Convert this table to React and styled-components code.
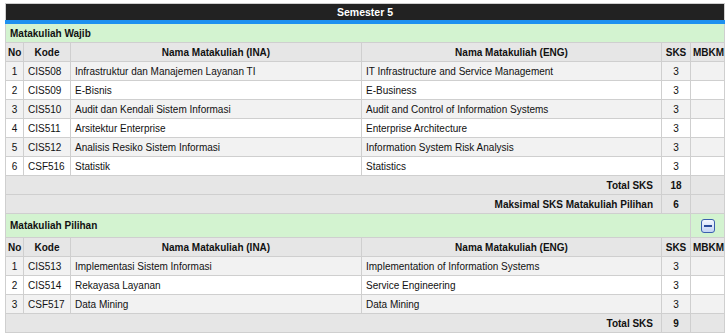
import React from "react";
import styled, { createGlobalStyle } from "styled-components";

const Global = createGlobalStyle`
  html, body { margin: 0; padding: 0; background: #fff; }
  body {
    font-family: "Liberation Sans", Arial, sans-serif;
    font-size: 10px;
    color: #111;
  }
`;

const Page = styled.div`
  padding: 3px 2px 0 5px;
`;

const Table = styled.table`
  width: 719px;
  border-collapse: collapse;
  table-layout: fixed;
  border: 1px solid #cfcfcf;
`;

const TitleCell = styled.th`
  background: #222;
  color: #fff;
  font-weight: bold;
  font-size: 10.5px;
  height: 16px;
  padding: 0;
  text-align: center;
  border-bottom: 4px solid #1e90ef;
`;

const GroupCell = styled.td`
  background: #d3f3d0;
  font-weight: bold;
  height: ${(p) => (p.$tall ? 23 : 18)}px;
  padding: 0 4px;
  border: 1px solid #cfcfcf;
`;

const HeadCell = styled.th`
  background: #e6e6e6;
  font-weight: bold;
  height: 18px;
  padding: 0 2px;
  text-align: center;
  border: 1px solid #cfcfcf;
  white-space: nowrap;
`;

const Row = styled.tr`
  background: ${(p) => (p.$odd ? "#f2f2f2" : "#fff")};
`;

const Cell = styled.td`
  height: 18px;
  padding: 0 4px;
  border: 1px solid #cfcfcf;
  text-align: ${(p) => p.$align || "left"};
  white-space: nowrap;
  overflow: hidden;
`;

const SumCell = styled.td`
  background: #e6e6e6;
  font-weight: bold;
  height: 18px;
  padding: 0 8px;
  border: 1px solid #cfcfcf;
  text-align: ${(p) => p.$align || "right"};
`;

const ToggleCell = styled.td`
  background: #d3f3d0;
  border: 1px solid #cfcfcf;
  text-align: center;
  padding: 0;
`;

const CollapseButton = styled.span`
  display: inline-block;
  vertical-align: middle;
  width: 12px;
  height: 12px;
  border: 1px solid #3a5fae;
  border-radius: 3px;
  background: linear-gradient(#f4f7ff, #c4d4f4);
  position: relative;
  &::after {
    content: "";
    position: absolute;
    left: 2px;
    right: 2px;
    top: 5px;
    height: 2px;
    background: #2b4c9a;
  }
`;

const wajib = [
  ["CIS508", "Infrastruktur dan Manajemen Layanan TI", "IT Infrastructure and Service Management"],
  ["CIS509", "E-Bisnis", "E-Business"],
  ["CIS510", "Audit dan Kendali Sistem Informasi", "Audit and Control of Information Systems"],
  ["CIS511", "Arsitektur Enterprise", "Enterprise Architecture"],
  ["CIS512", "Analisis Resiko Sistem Informasi", "Information System Risk Analysis"],
  ["CSF516", "Statistik", "Statistics"],
];

const pilihan = [
  ["CIS513", "Implementasi Sistem Informasi", "Implementation of Information Systems"],
  ["CIS514", "Rekayasa Layanan", "Service Engineering"],
  ["CSF517", "Data Mining", "Data Mining"],
];

function Header() {
  return (
    <tr>
      <HeadCell>No</HeadCell>
      <HeadCell>Kode</HeadCell>
      <HeadCell>Nama Matakuliah (INA)</HeadCell>
      <HeadCell>Nama Matakuliah (ENG)</HeadCell>
      <HeadCell>SKS</HeadCell>
      <HeadCell>MBKM</HeadCell>
    </tr>
  );
}

function Courses({ items }) {
  return items.map(([kode, ina, eng], i) => (
    <Row key={kode} $odd={i % 2 === 0}>
      <Cell $align="center">{i + 1}</Cell>
      <Cell>{kode}</Cell>
      <Cell>{ina}</Cell>
      <Cell>{eng}</Cell>
      <Cell $align="center">3</Cell>
      <Cell />
    </Row>
  ));
}

export default function App() {
  return (
    <>
      <Global />
      <Page>
        <Table>
          <colgroup>
            <col style={{ width: 18 }} />
            <col style={{ width: 47 }} />
            <col style={{ width: 291 }} />
            <col style={{ width: 300 }} />
            <col style={{ width: 29 }} />
            <col style={{ width: 34 }} />
          </colgroup>
          <tbody>
            <tr>
              <TitleCell colSpan={6}>Semester 5</TitleCell>
            </tr>
            <tr>
              <GroupCell colSpan={6}>Matakuliah Wajib</GroupCell>
            </tr>
            <Header />
            <Courses items={wajib} />
            <tr>
              <SumCell colSpan={4}>Total SKS</SumCell>
              <SumCell $align="center">18</SumCell>
              <SumCell />
            </tr>
            <tr>
              <SumCell colSpan={4}>Maksimal SKS Matakuliah Pilihan</SumCell>
              <SumCell $align="center">6</SumCell>
              <SumCell />
            </tr>
            <tr>
              <GroupCell colSpan={5} $tall>Matakuliah Pilihan</GroupCell>
              <ToggleCell>
                <CollapseButton />
              </ToggleCell>
            </tr>
            <Header />
            <Courses items={pilihan} />
            <tr>
              <SumCell colSpan={4}>Total SKS</SumCell>
              <SumCell $align="center">9</SumCell>
              <SumCell />
            </tr>
          </tbody>
        </Table>
      </Page>
    </>
  );
}
